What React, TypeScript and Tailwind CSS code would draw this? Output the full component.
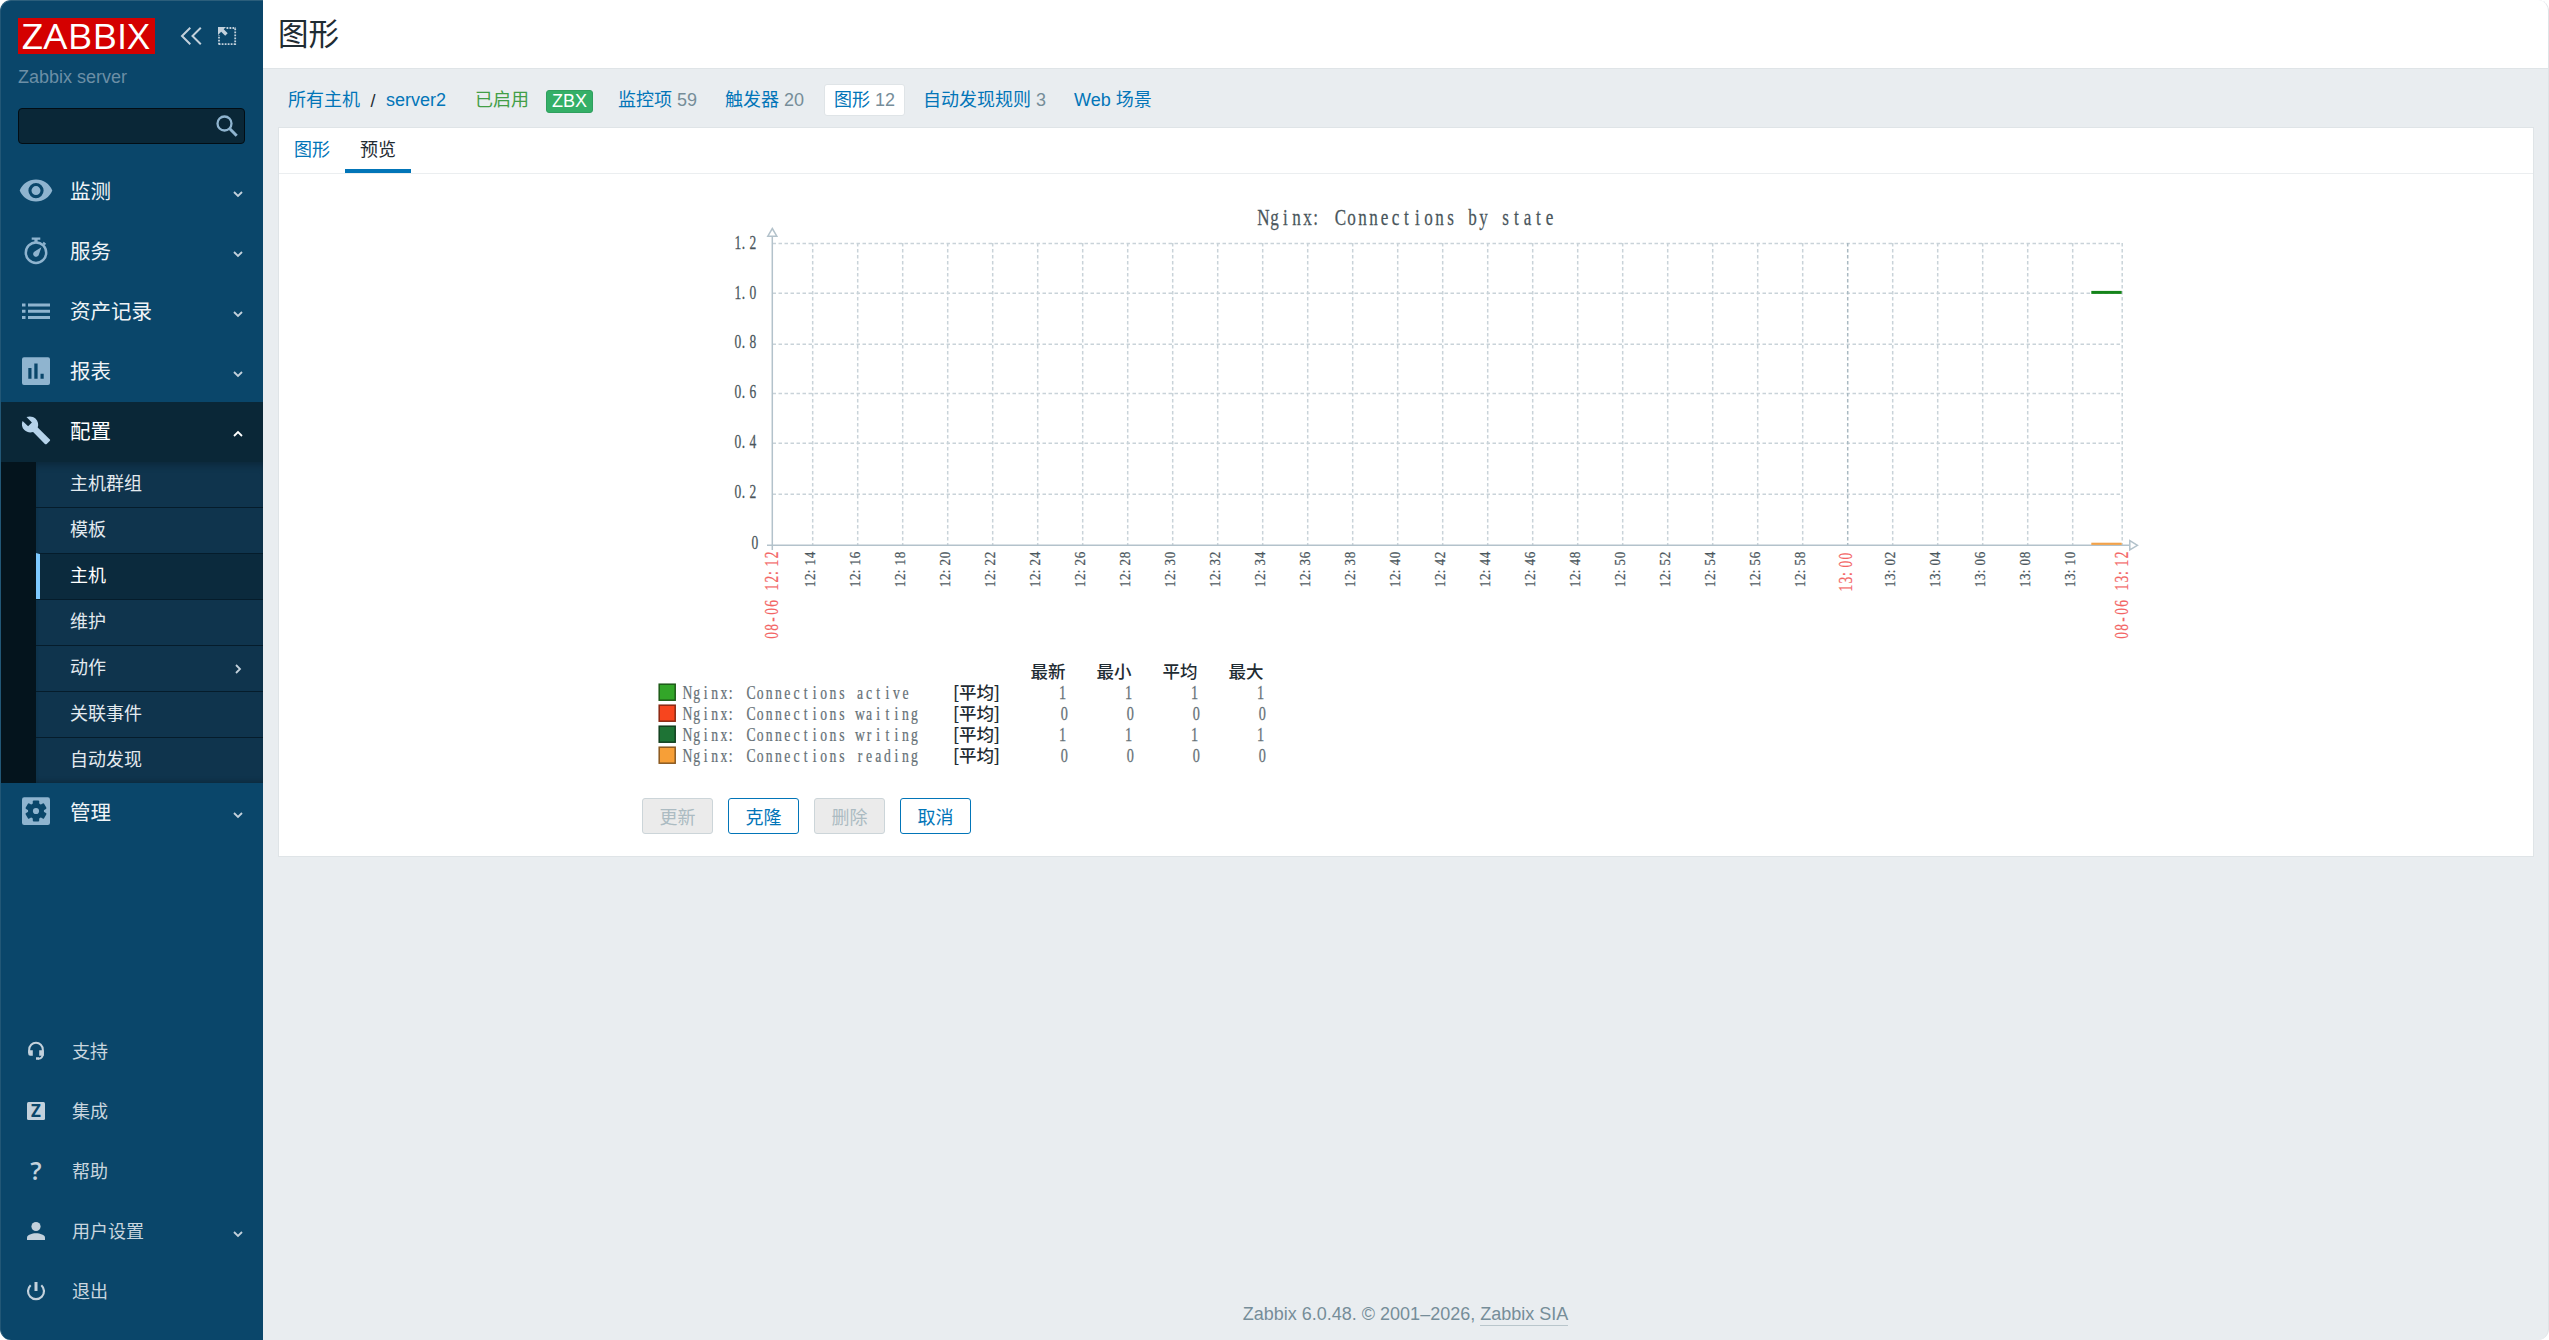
import React from 'react';

type Point = { label: string; x: number };

const mainMenu = [
  { label: '监测', icon: 'eye' },
  { label: '服务', icon: 'timer' },
  { label: '资产记录', icon: 'list' },
  { label: '报表', icon: 'report' },
];

const configMenu = [
  { label: '主机群组' },
  { label: '模板' },
  { label: '主机', active: true },
  { label: '维护' },
  { label: '动作', sub: true },
  { label: '关联事件' },
  { label: '自动发现' },
];

const userMenu = [
  { label: '支持', icon: 'support' },
  { label: '集成', icon: 'integrations' },
  { label: '帮助', icon: 'help' },
  { label: '用户设置', icon: 'user', arrow: true },
  { label: '退出', icon: 'power' },
];

const yTicks = [
  { label: '1.2', y: 243.6, base: 249.3 },
  { label: '1.0', y: 293.3, base: 298.5 },
  { label: '0.8', y: 344.2, base: 347.8 },
  { label: '0.6', y: 393.6, base: 397.5 },
  { label: '0.4', y: 443.3, base: 448.2 },
  { label: '0.2', y: 494.2, base: 497.8 },
];

// every two minutes from 12:14 to 13:10
const xTicks: Point[] = Array.from({ length: 29 }, (_, i) => {
  const min = 14 + i * 2;
  const h = min >= 60 ? 13 : 12;
  return { label: `${h}:${String(min % 60).padStart(2, '0')}`, x: 812.7 + i * 45 };
});

const legend = [
  { label: 'Nginx: Connections active', color: '#33a629', border: '#1c5a17', value: '1' },
  { label: 'Nginx: Connections waiting', color: '#f7451e', border: '#8a2712', value: '0' },
  { label: 'Nginx: Connections writing', color: '#1e7335', border: '#113f1e', value: '1' },
  { label: 'Nginx: Connections reading', color: '#f79f37', border: '#8a5920', value: '0' },
];

const columns = [
  { label: '最新', x: 1030.5, value: 1062.5 },
  { label: '最小', x: 1096.5, value: 1128.5 },
  { label: '平均', x: 1162.5, value: 1194.5 },
  { label: '最大', x: 1228.5, value: 1260.5 },
];

const MenuIcon = ({ name }: { name: string }) => {
  switch (name) {
    case 'eye':
      return (
        <svg viewBox="0 0 36 36" className="w-9 h-9" fill="#8fb4cf">
          <path fillRule="evenodd" d="M1.7 16.600C4.5 9.800 10.500 5.600 18 5.600s13.500 4.200 16.300 11c-2.800 6.800-8.800 11-16.300 11S4.500 23.400 1.700 16.600ZM18 9a7.600 7.600 0 1 0 0 15.200A7.600 7.600 0 0 0 18 9Zm0 3.100a4.500 4.500 0 1 1 0 9 4.500 4.500 0 0 1 0-9Z" />
        </svg>
      );
    case 'timer':
      return (
        <svg viewBox="0 0 36 36" className="w-9 h-9">
          <circle cx="18" cy="18.700" r="10.200" fill="none" stroke="#8fb4cf" strokeWidth="2.500" />
          <path fill="#8fb4cf" d="M13.700 3.400h8.600v2.300h-2.700v3h-3.200v-3h-2.700zM25.800 7.700l2.300 2-1.300 1.500-2.300-1.900zM23.400 13.200l-2.500 7.200a2.900 2.900 0 1 1-4.300-3z" />
        </svg>
      );
    case 'list':
      return (
        <svg viewBox="0 0 36 36" className="w-9 h-9" fill="#8fb4cf">
          <path d="M4 9.500h3.500v3H4zM10 9.500h22v3H10zM4 15.800h3.500v3H4zM10 15.800h22v3H10zM4 22h3.500v3H4zM10 22h22v3H10z" />
        </svg>
      );
    case 'report':
      return (
        <svg viewBox="0 0 36 36" className="w-9 h-9" fill="#8fb4cf">
          <path fillRule="evenodd" d="M6 3.300h24a2 2 0 0 1 2 2v23.700a2 2 0 0 1-2 2H6a2 2 0 0 1-2-2V5.300a2 2 0 0 1 2-2ZM10.300 14v10.700h3.200V14ZM16.300 9.500v15.200h3.300V9.500ZM22.500 19.700v5h3.200v-5Z" />
        </svg>
      );
    case 'wrench':
      return (
        <svg viewBox="0 0 36 36" className="w-9 h-9" fill="#b5d3ea">
          <path d="M31.600 27.300 19.700 15.500c1.100-3 .400-6.300-2-8.700-2.500-2.500-6.200-3-9.200-1.700l5.400 5.400-3.800 3.700-5.500-5.300c-1.400 3-.700 6.700 1.800 9.200 2.400 2.400 5.700 3 8.700 2l11.800 11.800c.5.500 1.300.5 1.800 0l3-3c.6-.5.600-1.300-.1-1.600Z" />
        </svg>
      );
    case 'gear':
      return (
        <svg viewBox="0 0 36 36" className="w-9 h-9">
          <rect x="4" y="4.300" width="28" height="27.700" rx="2.200" fill="#8fb4cf" />
          <g fill="#0a466a">
            <circle cx="18" cy="18" r="8" />
            {[0, 60, 120].map((a) => (
              <rect key={a} x="14.800" y="7.400" width="6.400" height="21.200" rx="1" transform={`rotate(${a} 18 18)`} />
            ))}
          </g>
          <circle cx="18" cy="18" r="3.100" fill="#8fb4cf" />
        </svg>
      );
    case 'support':
      return (
        <svg viewBox="0 0 36 36" className="w-9 h-9">
          <path d="M11.200 20v-3.500a6.800 6.800 0 0 1 13.600 0V21c0 3-1.500 4.500-4.500 4.700" fill="none" stroke="#c3d1dc" strokeWidth="2" />
          <path fill="#c3d1dc" d="M10.200 17.300h4.600v5.500h-2.500a2.100 2.100 0 0 1-2.100-2.100zM21.200 17.300h4.600v5.500h-4.600zM18 24.300h3v2.500h-3z" />
        </svg>
      );
    case 'integrations':
      return (
        <svg viewBox="0 0 36 36" className="w-9 h-9">
          <rect x="9" y="9" width="18" height="18" rx="1.500" fill="#c3d1dc" />
          <text x="18" y="24" textAnchor="middle" fontFamily="Open Sans, sans-serif" fontWeight="700" fontSize="17" fill="#0a466a">Z</text>
        </svg>
      );
    case 'help':
      return (
        <svg viewBox="0 0 36 36" className="w-9 h-9">
          <text x="18" y="27" textAnchor="middle" fontFamily="Open Sans, sans-serif" fontWeight="600" fontSize="25" fill="#c3d1dc">?</text>
        </svg>
      );
    case 'user':
      return (
        <svg viewBox="0 0 36 36" className="w-9 h-9" fill="#c3d1dc">
          <circle cx="18" cy="13.500" r="4.600" />
          <path d="M9 27v-2.500c0-2.600 5-4.300 9-4.300s9 1.700 9 4.300V27z" />
        </svg>
      );
    default:
      return (
        <svg viewBox="0 0 36 36" className="w-9 h-9" fill="none" stroke="#c3d1dc">
          <path d="M12.700 12.200a8 8 0 1 0 10.600 0" strokeWidth="2.200" />
          <path d="M18 9v9" strokeWidth="3" />
        </svg>
      );
  }
};

const Arrow = ({ dir = 'down' }: { dir?: 'down' | 'up' | 'right' }) => (
  <svg
    viewBox="0 0 10 10"
    className={`w-2.5 h-2.5 ${dir === 'up' ? 'rotate-180' : dir === 'right' ? '-rotate-90' : ''}`}
    fill="none"
    stroke={dir === 'up' ? '#ffffff' : '#c3d1dc'}
    strokeWidth="1.800"
  >
    <path d="M1 3 5 7 9 3" />
  </svg>
);

const Sidebar = () => (
  <aside className="w-[263px] h-[1340px] shrink-0 flex flex-col bg-[#0a466a] rounded-l-[11px] overflow-hidden border-l border-t border-l-[#225776] border-t-[#2b5e7b]">
    <div className="flex items-center pl-[17px] pt-[17px]">
      <svg width="137" height="36" viewBox="0 0 137 36" className="overflow-visible">
        <rect width="137" height="36" fill="#d40000" />
        <text x="3.500" y="30.700" fontFamily="Open Sans, sans-serif" fontSize="35" fill="#ffffff" textLength="128" lengthAdjust="spacingAndGlyphs">ZABBIX</text>
      </svg>
      <svg width="22" height="18" viewBox="0 0 22 18" className="ml-[25px]" fill="none" stroke="#c3d1dc" strokeWidth="2">
        <path d="M10.300 .800 2 9l8.300 8.200M20.800 .800 12.500 9l8.300 8.200" />
      </svg>
      <svg width="19" height="19" viewBox="0 0 19 19" className="ml-4" fill="none">
        <path d="M8.500 1H18M17.200 1.500V18M17.500 17.200H.5M1 17.500V8" stroke="#c3d1dc" strokeWidth="1.800" strokeDasharray="1.800 1.200" />
        <path fill="#c3d1dc" d="M0 0h8L5.700 2.300l4 4-2.500 2.500-4-4L0 8z" />
      </svg>
    </div>
    <div className="pl-[17px] mt-[11px] h-6 text-[18px] leading-6 text-[#6c8fa6]">Zabbix server</div>
    <div className="ml-[17px] mt-[19px] w-[227px] h-9 rounded-[4px] border border-[#020d14] bg-[#0a2737] flex items-center justify-end pr-[6px]">
      <svg width="22" height="22" viewBox="0 0 22 22" fill="none" stroke="#8fb4cf">
        <circle cx="8.500" cy="8.500" r="7" strokeWidth="2.300" />
        <path d="M13.800 13.800 20.700 20.700" strokeWidth="3" />
      </svg>
    </div>

    <nav className="mt-[18px]">
      {mainMenu.map((m) => (
        <div key={m.label} className="h-[60px] flex items-center pl-[17px] pr-5">
          <MenuIcon name={m.icon} />
          <span className="ml-4 flex-1 text-[20.500px] text-[#f0f4f7]">{m.label}</span>
          <div className="pt-[3px]"><Arrow /></div>
        </div>
      ))}
      <div className="h-[60px] flex items-center pl-[17px] pr-5 bg-[#0a2737] -ml-px">
        <div className="ml-px pb-1"><MenuIcon name="wrench" /></div>
        <span className="ml-4 flex-1 text-[20.500px] text-white">配置</span>
        <div className="pt-[3px]"><Arrow dir="up" /></div>
      </div>
      <div className="bg-[#04141d] pl-[35px]">
        <div className="shadow-[inset_0_8px_8px_-6px_rgba(0,0,0,0.3),inset_0_-5px_6px_-5px_rgba(0,0,0,0.35)] bg-[#0f344d]">
          {configMenu.map((m, i) => (
            <div
              key={m.label}
              className={`flex items-center pr-5 text-[18px] ${i > 0 ? 'h-[46px] border-t border-t-[#051c2b]' : 'h-[45px]'} ${
                m.active ? 'bg-[#0b2a3d] border-l-4 border-l-[#7cc9ff] pl-[30px] text-white' : 'pl-[34px] text-[#e3eaef]'
              }`}
            >
              <span className="flex-1 pb-px">{m.label}</span>
              {m.sub && <Arrow dir="right" />}
            </div>
          ))}
        </div>
      </div>
      <div className="h-[60px] flex items-center pl-[17px] pr-5">
        <div className="pb-1"><MenuIcon name="gear" /></div>
        <span className="ml-4 flex-1 text-[20.500px] text-[#f0f4f7]">管理</span>
        <div className="pt-[3px]"><Arrow /></div>
      </div>
    </nav>

    <nav className="mt-auto pb-[19px]">
      {userMenu.map((m) => (
        <div key={m.label} className="h-[60px] flex items-center pl-[17px] pr-5">
          <MenuIcon name={m.icon} />
          <span className="ml-[18px] pt-0.5 flex-1 text-[18px] text-[#c9d6df]">{m.label}</span>
          {m.arrow && <div className="pt-[5px]"><Arrow /></div>}
        </div>
      ))}
    </nav>
  </aside>
);

// Each character sits in the middle of a fixed cell, punctuation keeps to the left half.
const MonoText = ({ text, x, y, size, step, squash = 0.7, fill = '#4a565c', rotate = false }: {
  text: string; x: number; y: number; size: number; step: number; squash?: number; fill?: string; rotate?: boolean;
}) => {
  const cells = text.split('').map((c, i) => ((i + (c === '.' || c === ':' ? 0.24 : 0.5)) * step) / squash);
  return (
    <text
      transform={`translate(${x} ${y})${rotate ? ' rotate(-90)' : ''} scale(${squash} 1)`}
      x={cells.join(' ')}
      y="0"
      fontFamily="Liberation Serif, serif"
      fontSize={size}
      textAnchor="middle"
      fill={fill}
      stroke={fill}
      strokeWidth="0.250"
    >
      {text}
    </text>
  );
};

const Chart = () => (
  <svg width="1520" height="624" viewBox="642 174 1520 624" className="block">
    <MonoText text="Nginx: Connections by state" x={1258} y={224.500} size={22.500} step={11} squash={0.76} />

    <g stroke="#c9d3d9" strokeWidth="1.500" strokeDasharray="3.500 2.500">
      {yTicks.map((t) => (
        <line key={t.label} x1="772.500" x2="2122" y1={t.y} y2={t.y} />
      ))}
      {xTicks.map((t) => (
        <line key={t.label} x1={t.x} x2={t.x} y1="243" y2="545" stroke={t.label === '13:00' ? '#a9b9c2' : '#c9d3d9'} />
      ))}
      <line x1="2122.200" x2="2122.200" y1="243" y2="545" />
    </g>

    <g stroke="#b3c2cb" strokeWidth="1.500" fill="#ffffff">
      <path d="M772.300 236V550M767 545.300H2129" />
      <path d="M772.300 228.500 776.800 236.200H767.800ZM2137.500 545.300 2129.800 540.500V550Z" />
    </g>

    <path d="M2091.300 292.400H2121.700" stroke="#15841a" strokeWidth="3" />
    <path d="M2091.300 543.800H2121.700" stroke="#f2a24a" strokeWidth="2.200" />

    {yTicks.map((t) => (
      <MonoText key={t.label} text={t.label} x={734} y={t.base} size={18} step={7.600} squash={0.75} />
    ))}
    <MonoText text="0" x={751} y={548.700} size={18} step={7.600} squash={0.75} />

    {xTicks.map((t) =>
      t.label === '13:00' ? (
        <MonoText key={t.label} text={t.label} x={1851.500} y={592} size={18} step={8} squash={0.75} fill="#f36464" rotate />
      ) : (
        <MonoText key={t.label} text={t.label} x={t.x + 2.100} y={587.500} size={14.500} step={7.200} squash={0.9} rotate />
      )
    )}
    <MonoText text="08-06 12:12" x={777.600} y={639.500} size={18} step={8.050} squash={0.75} fill="#f36464" rotate />
    <MonoText text="08-06 13:12" x={2127.600} y={639.500} size={18} step={8.050} squash={0.75} fill="#f36464" rotate />

    {columns.map((c) => (
      <text key={c.label} x={c.x} y="677.500" fontFamily="Noto Sans CJK SC, sans-serif" fontSize="17.500" fontWeight="500" fill="#1f2c33">{c.label}</text>
    ))}
    {legend.map((l, i) => (
      <g key={l.label}>
        <rect x="659.200" y={684.200 + i * 21} width="16" height="16" fill={l.color} stroke={l.border} strokeWidth="1.500" />
        <MonoText text={l.label} x={683} y={699.300 + i * 21} size={19} step={9.080} squash={0.72} fill="#667177" />
        <text x="953" y={698.500 + i * 21} fontFamily="Noto Sans CJK SC, sans-serif" fontSize="17.500" fontWeight="500" fill="#1f2c33" textLength="47" lengthAdjust="spacing">[平均]</text>
        {columns.map((c) => (
          <MonoText
            key={c.label}
            text={l.value}
            x={c.value - 4.500 + (l.value === '0' ? 1.700 : 0)}
            y={699.300 + i * 21}
            size={19}
            step={9}
            squash={0.75}
            fill="#667177"
          />
        ))}
      </g>
    ))}
  </svg>
);

const NavItem = ({ label, count }: { label: string; count?: number }) => (
  <div>
    <span className="text-[#0275b8]">{label}</span>
    {count !== undefined && <span className="text-[#768d99] ml-[5px]">{count}</span>}
  </div>
);

const Breadcrumbs = () => (
  <div className="flex items-center h-8 mt-[15px] pl-[25px] text-[18px] leading-[30px] whitespace-nowrap">
    <span className="text-[#0275b8]">所有主机</span>
    <span className="w-[26px] text-center text-[#1f2c33] pt-0.5">/</span>
    <span className="text-[#0275b8] w-[61px]">server2</span>
    <span className="text-[#429e47] ml-7 w-[54px]">已启用</span>
    <span className="ml-[17px] mt-[3px] w-[47px] h-[23px] rounded-[3px] border border-[#2f9f5e] bg-[#34af67] text-white text-center leading-[21px]">ZBX</span>
    <div className="ml-[25px] w-[80px]"><NavItem label="监控项" count={59} /></div>
    <div className="ml-[27px] w-[80px]"><NavItem label="触发器" count={20} /></div>
    <div className="ml-[19px] w-[81px] h-8 pl-[9px] bg-white border border-[#dfe4e7] rounded-[3px]"><NavItem label="图形" count={12} /></div>
    <div className="ml-[18px] w-[123px]"><NavItem label="自动发现规则" count={3} /></div>
    <div className="ml-[28px]"><NavItem label="Web 场景" /></div>
  </div>
);

const Button = ({ label, disabled = false }: { label: string; disabled?: boolean }) => (
  <button
    disabled={disabled}
    className={`w-[71px] h-9 pt-[3px] rounded-[3px] border text-[18px] leading-none ${
      disabled ? 'bg-[#ebebeb] border-[#ccd5d9] text-[#acbbc2]' : 'bg-white border-[#0275b8] text-[#0275b8]'
    }`}
  >
    {label}
  </button>
);

export default function App() {
  return (
    <div className="w-[2549px] h-[1340px] bg-white overflow-hidden">
      <div
        className="flex h-full"
        style={{ fontFamily: '"Liberation Sans", "Noto Sans CJK SC", sans-serif' }}
      >
        <Sidebar />
        <main className="flex-1 flex flex-col bg-[#e9edf0] rounded-r-[11px] overflow-hidden border-r border-r-[#dfe3e6]">
          <header className="h-[69px] bg-white border-b border-b-[#dfe4e7] pl-[15px] pt-px flex items-center">
            <h1 className="text-[30.500px] leading-none text-[#1f2c33]">图形</h1>
          </header>
          <Breadcrumbs />

          <section className="mt-[11px] ml-[15px] w-[2256px] h-[730px] bg-white border border-[#dfe4e7]">
            <div className="flex h-[46px] border-b border-b-[#ebeef0] text-[18px] leading-[44px]">
              <div className="w-[66px] text-center text-[#0275b8]">图形</div>
              <div className="w-[66px] h-[45px] text-center text-[#1f2c33] border-b-4 border-b-[#0275b8]">预览</div>
            </div>
            <div className="pl-[363px]">
              <Chart />
              <div className="flex gap-[15px]">
                <Button label="更新" disabled />
                <Button label="克隆" />
                <Button label="删除" disabled />
                <Button label="取消" />
              </div>
            </div>
          </section>

          <footer className="mt-auto pb-[13px] text-center text-[18px] leading-[26px] text-[#768d99]">
            Zabbix 6.0.48. © 2001–2026, <span className="inline-block leading-[21px] border-b border-b-[#b9c6cc]">Zabbix SIA</span>
          </footer>
        </main>
      </div>
    </div>
  );
}
